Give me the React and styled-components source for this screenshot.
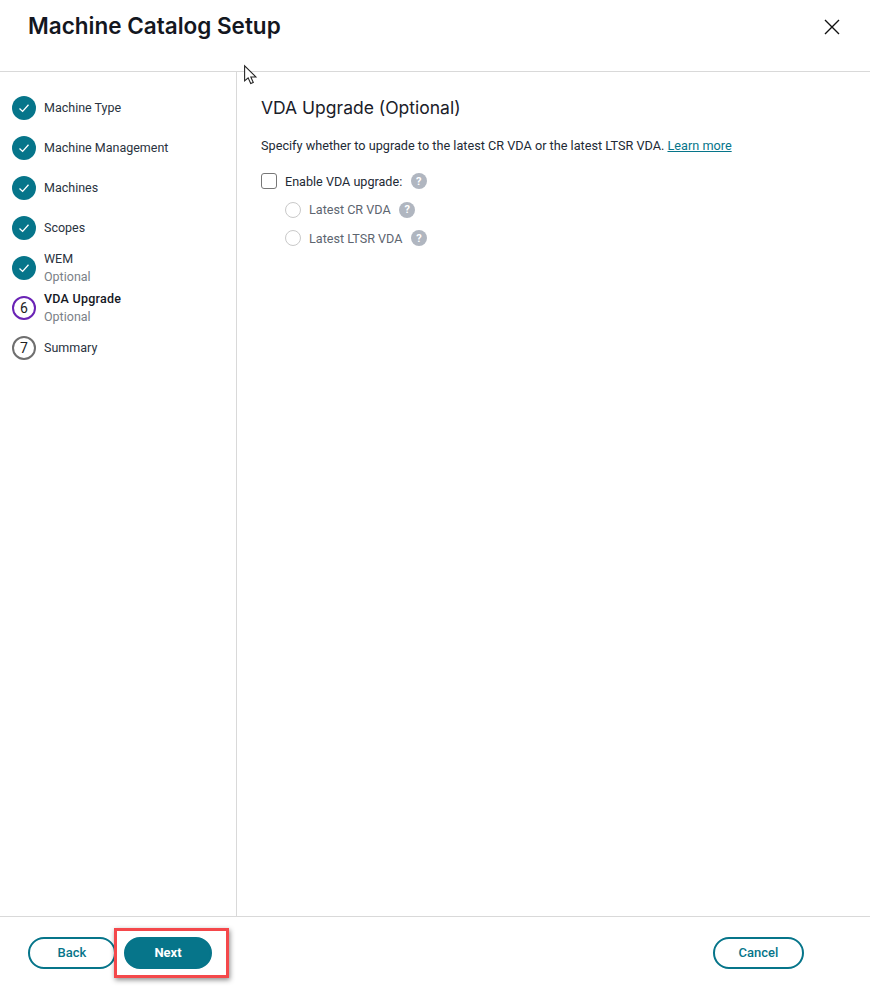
import React from "react";
import styled, { createGlobalStyle } from "styled-components";

const GlobalStyle = createGlobalStyle`
  html, body {
    margin: 0;
    padding: 0;
    background: #ffffff;
  }
  body {
    font-family: Roboto, "Liberation Sans", sans-serif;
    color: #1f2a37;
  }
`;

const Dialog = styled.div`
  position: relative;
  width: 870px;
  height: 986px;
  display: flex;
  flex-direction: column;
  overflow: hidden;
  background: #fff;
`;

const Header = styled.header`
  height: 72px;
  flex: none;
  box-sizing: border-box;
  padding: 11px 30px 0 28px;
  display: flex;
  justify-content: space-between;
  align-items: flex-start;
  border-bottom: 1px solid #d9d9d9;
`;

const Title = styled.h1`
  margin: 0;
  font-family: Inter, sans-serif;
  font-size: 22.5px;
  line-height: 29px;
  font-weight: 600;
  color: #14171f;
`;

const CloseButton = styled.button`
  border: 0;
  padding: 0;
  margin-top: 8px;
  background: none;
  width: 16px;
  height: 16px;
  display: block;
`;

const Body = styled.div`
  flex: 1;
  display: flex;
  min-height: 0;
`;

const Sidebar = styled.nav`
  width: 237px;
  flex: none;
  box-sizing: border-box;
  border-right: 1px solid #d9d9d9;
  padding: 16px 0 0 12px;
`;

const Step = styled.div`
  height: 40px;
  display: flex;
  align-items: center;
  gap: 8px;
`;

const Circle = styled.div`
  width: 24px;
  height: 24px;
  flex: none;
  box-sizing: border-box;
  border-radius: 50%;
  display: flex;
  align-items: center;
  justify-content: center;
  font-size: 14px;
  color: #222;
  background: ${(p) => (p.$state === "done" ? "#06758a" : "#fff")};
  border: ${(p) =>
    p.$state === "current"
      ? "2px solid #6a23b5"
      : p.$state === "todo"
        ? "2px solid #6f6f6f"
        : "0"};
`;

const StepText = styled.div`
  display: flex;
  flex-direction: column;
`;

const StepLabel = styled.span`
  font-size: 12.5px;
  line-height: 18px;
  letter-spacing: ${(p) => (p.$current ? "0.25px" : "0")};
  color: ${(p) => (p.$current ? "#14171f" : "#2a3340")};
  font-weight: ${(p) => (p.$current ? 500 : 400)};
`;

const StepHint = styled.span`
  font-size: 12.5px;
  line-height: 18px;
  color: #7a7f87;
`;

const Content = styled.main`
  flex: 1;
  padding: 25px 0 0 24px;
`;

const Heading = styled.h2`
  margin: 0 0 17px;
  font-family: Inter, sans-serif;
  font-size: 17.5px;
  line-height: 22px;
  font-weight: 400;
  color: #1a2029;
`;

const Description = styled.p`
  margin: 0 0 11px;
  font-size: 12.7px;
  line-height: 20px;
  color: #222a35;
`;

const LearnMore = styled.a`
  color: #06758a;
  text-decoration: underline;
`;

const OptionRow = styled.label`
  height: 28.5px;
  display: flex;
  align-items: center;
  padding-left: ${(p) => (p.$nested ? "24px" : "0")};
  font-size: 12.6px;
  color: ${(p) => (p.$nested ? "#5d6570" : "#222a35")};
`;

const CheckBox = styled.span`
  width: 16px;
  height: 16px;
  box-sizing: border-box;
  border: 1px solid #777;
  border-radius: 3px;
  margin-right: 8px;
`;

const Radio = styled.span`
  width: 16px;
  height: 16px;
  box-sizing: border-box;
  border: 1px solid #c9c9c9;
  border-radius: 50%;
  margin-right: 8px;
`;

const HelpIcon = styled.span`
  width: 16px;
  height: 16px;
  margin-left: 8.5px;
  border-radius: 50%;
  background: #b0b6c0;
  color: #fff;
  font-size: 11px;
  font-weight: 700;
  display: flex;
  align-items: center;
  justify-content: center;
`;

const Footer = styled.footer`
  height: 70px;
  flex: none;
  box-sizing: border-box;
  border-top: 1px solid #d9d9d9;
  padding: 20px 66px 0 28px;
  display: flex;
  align-items: flex-start;
  gap: 8px;
`;

const Button = styled.button`
  width: ${(p) => p.$width}px;
  height: 32px;
  box-sizing: border-box;
  border-radius: 16px;
  border: 2px solid #06758a;
  background: ${(p) => (p.$primary ? "#06758a" : "#fff")};
  color: ${(p) => (p.$primary ? "#fff" : "#06758a")};
  font-family: Roboto, sans-serif;
  font-size: 13px;
  font-weight: ${(p) => (p.$primary ? 700 : 500)};
  margin-left: ${(p) => (p.$push ? "auto" : "0")};
  padding: 0 0 2px;
`;

const Highlight = styled.div`
  position: absolute;
  left: 114px;
  top: 928px;
  width: 115px;
  height: 50px;
  box-sizing: border-box;
  border: 3px solid #f4484b;
  box-shadow: 1px 2px 5px rgba(0, 0, 0, 0.45);
`;

const Cursor = styled.svg`
  position: absolute;
  left: 243px;
  top: 64px;
`;

const steps = [
  { label: "Machine Type", state: "done" },
  { label: "Machine Management", state: "done" },
  { label: "Machines", state: "done" },
  { label: "Scopes", state: "done" },
  { label: "WEM", hint: "Optional", state: "done" },
  { label: "VDA Upgrade", hint: "Optional", state: "current", number: 6 },
  { label: "Summary", state: "todo", number: 7 },
];

const App = () => {
  return (
    <Dialog>
      <GlobalStyle />
      <Header>
        <Title>Machine Catalog Setup</Title>
        <CloseButton aria-label="Close">
          <svg width="16" height="16" viewBox="0 0 16 16">
            <path d="M1 1L15 15M15 1L1 15" stroke="#111" strokeWidth="1.4" fill="none" />
          </svg>
        </CloseButton>
      </Header>
      <Body>
        <Sidebar>
          {steps.map((each) => (
            <Step key={each.label}>
              <Circle $state={each.state}>
                {each.state === "done" ? (
                  <svg width="14" height="14" viewBox="0 0 14 14">
                    <path d="M2.5 7.5L5.6 10.4L11.5 3.8" stroke="#fff" strokeWidth="1.3" fill="none" />
                  </svg>
                ) : (
                  each.number
                )}
              </Circle>
              <StepText>
                <StepLabel $current={each.state === "current"}>{each.label}</StepLabel>
                {each.hint && <StepHint>{each.hint}</StepHint>}
              </StepText>
            </Step>
          ))}
        </Sidebar>
        <Content>
          <Heading>VDA Upgrade (Optional)</Heading>
          <Description>
            Specify whether to upgrade to the latest CR VDA or the latest LTSR VDA.{" "}
            <LearnMore href="#">Learn more</LearnMore>
          </Description>
          <OptionRow>
            <CheckBox />
            Enable VDA upgrade:
            <HelpIcon>?</HelpIcon>
          </OptionRow>
          <OptionRow $nested>
            <Radio />
            Latest CR VDA
            <HelpIcon>?</HelpIcon>
          </OptionRow>
          <OptionRow $nested>
            <Radio />
            Latest LTSR VDA
            <HelpIcon>?</HelpIcon>
          </OptionRow>
        </Content>
      </Body>
      <Footer>
        <Button $width={88}>Back</Button>
        <Button $width={88} $primary>Next</Button>
        <Button $width={91} $push>Cancel</Button>
      </Footer>
      <Highlight />
      <Cursor width="15" height="22" viewBox="0 0 14 20">
        <path d="M1.5 1.5V15.5L4.8 12.6L7.2 18L9.6 17L7.3 11.8H12L1.5 1.5Z" fill="#fff" stroke="#222" strokeWidth="1" />
      </Cursor>
    </Dialog>
  );
};

export default App;
